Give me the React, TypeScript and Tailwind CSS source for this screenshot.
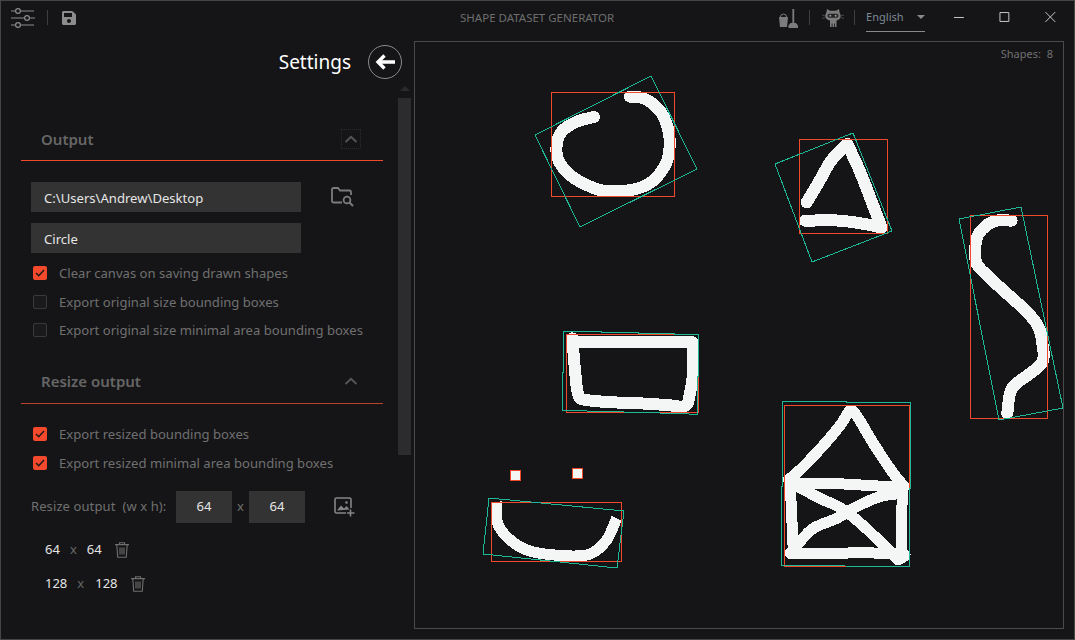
import React from "react";
import { FaSave } from "react-icons/fa";

type P = [number, number];
const font = { fontFamily: '"Noto Sans", sans-serif' };

function smooth(pts: P[]): string {
  let d = `M${pts[0][0]} ${pts[0][1]}`;
  for (let i = 0; i < pts.length - 1; i++) {
    const p0 = pts[i - 1] ?? pts[i];
    const p1 = pts[i];
    const p2 = pts[i + 1];
    const p3 = pts[i + 2] ?? p2;
    const c1 = [p1[0] + (p2[0] - p0[0]) / 6, p1[1] + (p2[1] - p0[1]) / 6];
    const c2 = [p2[0] - (p3[0] - p1[0]) / 6, p2[1] - (p3[1] - p1[1]) / 6];
    d += ` C${c1[0]} ${c1[1]} ${c2[0]} ${c2[1]} ${p2[0]} ${p2[1]}`;
  }
  return d;
}
const z = (ox: number, oy: number, pts: P[]): P[] => pts.map(([x, y]) => [ox + x / 3, oy + y / 3]);
const str = (pts: P[]) => pts.map((p) => p.join(",")).join(" ");

const strokes: { d: P[]; w: number; cap?: "round" | "butt" }[] = [
  { w: 12, d: z(520, 70, [[222, 141], [170, 155], [125, 185], [110, 225], [115, 270], [150, 315], [200, 345], [250, 362], [320, 362], [380, 345], [420, 310], [445, 260], [447, 190], [425, 130], [390, 95], [360, 82], [330, 80]]) },
  { w: 12, d: z(760, 125, [[140, 232], [180, 165], [215, 105], [262, 57]]) },
  { w: 12, d: z(760, 125, [[262, 57], [300, 140], [335, 230], [365, 308]]) },
  { w: 12, d: z(760, 125, [[365, 308], [330, 300], [240, 287], [135, 287]]) },
  { w: 12, d: z(950, 200, [[185, 62], [140, 62], [105, 80], [80, 115], [78, 185], [110, 225], [170, 280], [230, 335], [265, 380], [277, 430], [275, 490], [200, 550], [180, 580], [172, 640]]) },
  { w: 12, d: z(550, 320, [[67, 55], [75, 150], [85, 225], [110, 240], [190, 247], [270, 250], [350, 255], [405, 258], [420, 220], [430, 150], [428, 67]]) },
  { w: 12, d: z(550, 320, [[428, 67], [250, 67], [67, 67]]) },
  { w: 11, d: z(770, 395, [[55, 255], [100, 215], [170, 140], [215, 85], [240, 47], [262, 65], [310, 145], [370, 235], [403, 275]]) },
  { w: 11, d: z(770, 395, [[60, 265], [180, 265], [400, 278]]) },
  { w: 11, d: z(770, 395, [[60, 255], [65, 360], [70, 470]]) },
  { w: 11, d: z(770, 395, [[60, 475], [375, 475], [395, 490]]) },
  { w: 11, d: z(770, 395, [[398, 280], [395, 370], [395, 480]]) },
  { w: 11, d: z(770, 395, [[75, 270], [150, 310], [205, 335], [260, 375], [320, 430], [385, 495]]) },
  { w: 11, d: z(770, 395, [[85, 445], [130, 400], [200, 370], [260, 335], [330, 305], [395, 295]]) },
  { w: 11, cap: "butt", d: z(475, 460, [[65, 125], [68, 190], [100, 235], [150, 268], [210, 282], [300, 288], [350, 280], [395, 240], [425, 175]]) },
];

const reds = [
  [551, 92, 123, 104],
  [799, 139, 88, 94],
  [970, 215, 77, 203],
  [566, 334, 132, 78],
  [784, 405, 125, 161],
  [491, 502, 130, 59],
];

const greens: P[][] = [
  [[651, 76], [697, 169], [580, 227], [535, 135]],
  [[853, 133], [892, 231], [812, 262], [775, 164]],
  [[1021, 207], [1063, 408], [999, 420], [959, 219]],
  z(550, 320, [[41, 33], [153, 33], [153, 36], [265, 36], [265, 39], [372, 39], [372, 42], [447, 42], [445, 42], [445, 170], [442, 170], [442, 283], [366, 280], [258, 277], [147, 274], [37, 271], [37, 158], [41, 158]]),
  z(770, 395, [[38, 20], [230, 20], [230, 23], [423, 23], [422, 280], [418, 280], [418, 516], [225, 513], [34, 511], [34, 275], [38, 275]]),
  [[489, 498], [624, 511], [617, 568], [483, 554]],
];

function Canvas() {
  return (
    <div className="relative mb-[10px] mt-[7px] mr-[10px] flex-1 border border-[#4a4a4a] bg-[#151517]">
      <svg viewBox="415 42 648 586" className="block h-full w-full" shapeRendering="crispEdges" fill="none">
        {strokes.map((s, i) => (
          <path key={i} d={smooth(s.d)} stroke="#f4f5f5" strokeWidth={s.w} strokeLinecap={s.cap ?? "round"} strokeLinejoin="round" />
        ))}
        <rect x="510.5" y="470.5" width="10" height="10" fill="#f4f5f5" stroke="#f0492c" />
        <rect x="572.5" y="468.5" width="10" height="10" fill="#f4f5f5" stroke="#f0492c" />
        {reds.map((r, i) => (
          <rect key={i} x={r[0] + 0.5} y={r[1] + 0.5} width={r[2]} height={r[3]} stroke="#f0492c" />
        ))}
        {greens.map((g, i) => (
          <polygon key={i} points={str(g)} stroke="#1fb896" />
        ))}
      </svg>
      <span className="absolute right-[10px] top-[3px] text-[11px] leading-[18px] text-[#707070]">Shapes:&nbsp; 8</span>
    </div>
  );
}

function Sliders() {
  return (
    <svg width="24" height="20" viewBox="0 0 24 20" fill="none" stroke="#8c8c8c" strokeWidth="1.2">
      <path d="M0 3h4M10 3h13M0 10h13M19 10h5M0 17h4M10 17h13" />
      <circle cx="7" cy="3" r="2.4" />
      <circle cx="16" cy="10" r="2.4" />
      <circle cx="7" cy="17" r="2.4" />
    </svg>
  );
}

function Sweep() {
  return (
    <svg width="20" height="20" viewBox="0 0 20 20" fill="#7c7c7c">
      <path d="M0 9h9l-1 10H1z" />
      <path d="M1.500 9a3 3 0 0 1 6 0" fill="none" stroke="#7c7c7c" strokeWidth="1" />
      <rect x="13.400" y="1" width="1.800" height="14" />
      <path d="M11.500 15h5.500l2 2.500V20h-9.500v-2.500z" />
    </svg>
  );
}

function Cat() {
  return (
    <svg width="22" height="20" viewBox="0 0 22 20" fill="#7c7c7c">
      <path d="M5 1l3 1.800h6L17 1l.7 4c.8 1 1 2.200 1 3 0 2.500-2 4.200-4.200 4.500V19h-1.700v-3.500h-.8V19h-1.500v-3.500h-.8V19H8v-6.500C5.300 12.200 3.300 10.500 3.300 8c0-.8.200-2 1-3z" />
      <rect x="5.500" y="5.800" width="11" height="4" rx="2" fill="#232325" />
      <circle cx="8.300" cy="7.800" r="1" fill="#9a9a9a" />
      <circle cx="13.700" cy="7.800" r="1" fill="#9a9a9a" />
      <path d="M0 7l3.300 1M0 10.500l3.300-1M22 7l-3.300 1M22 10.500l-3.300-1" stroke="#5c5c5c" strokeWidth=".7" />
    </svg>
  );
}

function Chevron() {
  return (
    <svg width="14" height="8" viewBox="0 0 14 8" fill="none" stroke="#555555" strokeWidth="2">
      <path d="M1.500 7L7 1.800 12.500 7" />
    </svg>
  );
}

function FolderSearch() {
  return (
    <svg width="24" height="20" viewBox="0 0 24 20" fill="none" stroke="#7c7c7c" strokeWidth="1.800">
      <path d="M11 15.500H2.500a1.500 1.500 0 0 1-1.500-1.500V2.500A1.500 1.500 0 0 1 2.500 1H7l2 2.500h9.500A1.500 1.500 0 0 1 20 5v3" />
      <circle cx="16" cy="13" r="3.400" />
      <path d="M18.500 15.500l3.500 3.500" strokeWidth="2" />
    </svg>
  );
}

function ImageAdd() {
  return (
    <svg width="21" height="20" viewBox="0 0 21 20" fill="none" stroke="#858585" strokeWidth="1.600">
      <path d="M12 16H2.500A1.500 1.500 0 0 1 1 14.500v-12A1.500 1.500 0 0 1 2.500 1h13A1.500 1.500 0 0 1 17 2.500V11" />
      <path d="M3 13.500l4-5 3 3 2.500-2.500 3 3.500z" fill="#858585" stroke="none" />
      <circle cx="12.500" cy="5.500" r="1.300" fill="#858585" stroke="none" />
      <path d="M16.500 12.500v7M13 16h7.500" />
    </svg>
  );
}

function Trash() {
  return (
    <svg width="14" height="16" viewBox="0 0 14 16" fill="none" stroke="#6e6e6e" strokeWidth="1.100">
      <path d="M0 2.600h14M4.500 2.600V.8h5v1.800M1.800 2.600l.9 12.600h8.600l.9-12.600M5 5.500v7M7 5.500v7M9 5.500v7" />
    </svg>
  );
}

function Check({ on, label }: { on: boolean; label: string }) {
  return (
    <div className="flex h-[18px] items-center">
      <span className={`ml-[2px] flex h-[14px] w-[14px] items-center justify-center rounded-[2px] ${on ? "bg-[#f4492c]" : "border border-[#3a3a3a] bg-[#1a1a1c]"}`}>
        {on && (
          <svg width="10" height="8" viewBox="0 0 10 8" fill="none" stroke="#1a1a1a" strokeWidth="1.400">
            <path d="M1 4l2.700 2.800L9 1" />
          </svg>
        )}
      </span>
      <span className="ml-[12px] whitespace-nowrap text-[13.100px] leading-[18px] text-[#707070]">{label}</span>
    </div>
  );
}

function Section({ title, line, dotted, h }: { title: string; line: string; dotted?: boolean; h: string }) {
  return (
    <div className={`flex items-center justify-between border-b pl-[20px] pr-[22px] ${h} ${line}`}>
      <span className="text-[15px] font-semibold leading-[20px] text-[#666666]">{title}</span>
      <span className={`flex h-[20px] w-[20px] items-center justify-center ${dotted ? "border border-dotted border-[#2c2c2c]" : ""}`}>
        <Chevron />
      </span>
    </div>
  );
}

function Size({ a, gap1, gap2, gap3 }: { a: string; gap1: string; gap2: string; gap3: string }) {
  return (
    <div className="flex h-[34px] items-center pl-[44px] text-[13px] text-[#e6e6e6]">
      <span>{a}</span>
      <span className={`text-[#666666] ${gap1}`}>x</span>
      <span className={gap2}>{a}</span>
      <span className={gap3}><Trash /></span>
    </div>
  );
}

export default function App() {
  return (
    <div className="flex h-[640px] w-[1075px] flex-col overflow-hidden border border-[#454545] bg-[#151517]" style={font}>
      <header className="flex h-[33px] shrink-0 items-center">
        <span className="ml-[10px]"><Sliders /></span>
        <span className="ml-[12px] h-[15px] w-px bg-[#3e3e3e]" />
        <span className="ml-[13px]"><FaSave size={16} color="#8c8c8c" /></span>
        <span className="ml-[383px] w-[155px] whitespace-nowrap text-[11.500px] leading-[16px] text-[#6e6e6e]">SHAPE DATASET GENERATOR</span>
        <span className="ml-[165px]"><Sweep /></span>
        <span className="ml-[10px] h-[15px] w-px bg-[#3e3e3e]" />
        <span className="ml-[12px]"><Cat /></span>
        <span className="ml-[10px] h-[15px] w-px bg-[#3e3e3e]" />
        <div className="ml-[11px] mt-[1px] flex h-[27px] w-[60px] items-center justify-between border-b border-[#8a8a8a]">
          <span className="mb-[2px] text-[11px] leading-[16px] text-[#7d8a94]">English</span>
          <span className="mb-[2px] h-0 w-0 border-x-[4px] border-t-[4px] border-x-transparent border-t-[#8a8a8a]" />
        </div>
        <svg width="122" height="14" viewBox="0 0 122 14" fill="none" stroke="#c8c8c8" className="mb-[2px] ml-[28px]">
          <path d="M1 7.500h10M47.500 2.500h9v9h-9zM93.500 2l10 10M103.500 2l-10 10" />
        </svg>
      </header>
      <main className="flex min-h-0 flex-1">
        <aside className="flex w-[413px] shrink-0">
          <div className="w-[397px] shrink-0">
            <div className="flex h-[56px] items-center justify-end">
              <span className="text-[19px] leading-[28px] text-white">Settings</span>
              <span className="ml-[17px] mr-[-4px] flex h-[34px] w-[34px] shrink-0 items-center justify-center rounded-full border-[1.500px] border-[#8a8a8a]">
                <svg width="21" height="16" viewBox="0 0 21 16" fill="none" stroke="#ffffff" strokeWidth="3.400">
                  <path d="M20 8H3M9.500 1.500L3 8l6.500 6.500" />
                </svg>
              </span>
            </div>
            <div className="ml-[20px] w-[362px]">
              <div className="pt-[27px]">
                <Section title="Output" line="border-[#f0492c]" h="h-[44px]" dotted />
              </div>
              <div className="ml-[10px] mt-[21px] flex items-center">
                <div className="flex h-[30px] w-[270px] items-center bg-[#333333] pl-[13px] pt-[4px] text-[13.100px] text-[#e6e6e6]">C:\Users\Andrew\Desktop</div>
                <span className="ml-[30px]"><FolderSearch /></span>
              </div>
              <div className="ml-[10px] mt-[11px] flex h-[30px] w-[270px] items-center bg-[#333333] pl-[13px] pt-[4px] text-[13.100px] text-[#e6e6e6]">Circle</div>
              <div className="ml-[10px] mt-[11px] flex flex-col gap-[10.500px]">
                <Check on label="Clear canvas on saving drawn shapes" />
                <Check on={false} label="Export original size bounding boxes" />
                <Check on={false} label="Export original size minimal area bounding boxes" />
              </div>
              <div className="mt-[20px]">
                <Section title="Resize output" line="border-[#b8442c]" h="h-[45px]" />
              </div>
              <div className="ml-[10px] mt-[21px] flex flex-col gap-[11px]">
                <Check on label="Export resized bounding boxes" />
                <Check on label="Export resized minimal area bounding boxes" />
              </div>
              <div className="ml-[10px] mt-[19px] flex items-center text-[13px] text-[#707070]">
                <span className="w-[145px] whitespace-nowrap tracking-[0.1px]">Resize output&nbsp;&nbsp;(w x h):</span>
                <span className="flex h-[32px] w-[56px] items-center justify-center bg-[#333333] text-[#e6e6e6]">64</span>
                <span className="w-[17px] text-center">x</span>
                <span className="flex h-[32px] w-[56px] items-center justify-center bg-[#333333] text-[#e6e6e6]">64</span>
                <span className="ml-[29px]"><ImageAdd /></span>
              </div>
              <div className="ml-[-20px] mt-[10px]">
                <Size a="64" gap1="ml-[10px]" gap2="ml-[10px]" gap3="ml-[13px]" />
                <Size a="128" gap1="ml-[10px]" gap2="ml-[11px]" gap3="ml-[13px]" />
              </div>
            </div>
          </div>
          <div className="flex w-[13px] shrink-0 flex-col items-center pt-[52px]">
            <span className="h-0 w-0 border-x-[5px] border-b-[5px] border-x-transparent border-b-[#2a2a2c]" />
            <div className="mt-[7px] h-[357px] w-[13px] bg-[#2c2c2e]" />
          </div>
        </aside>
        <Canvas />
      </main>
    </div>
  );
}
